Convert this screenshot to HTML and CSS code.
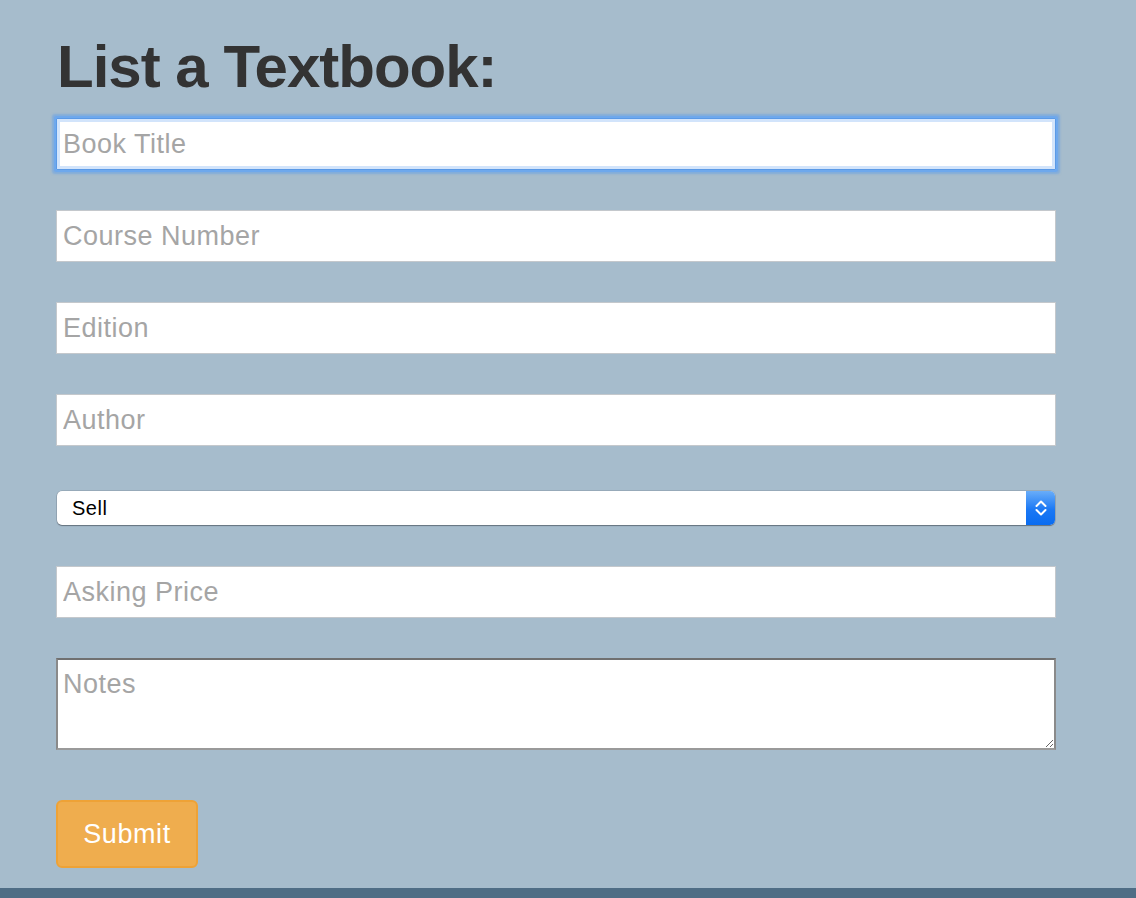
FILE: index.html
```html
<!DOCTYPE html>
<html lang="en">
<head>
<meta charset="utf-8">
<title>List a Textbook</title>
<link rel="stylesheet" href="styles.css">
</head>
<body>
<main class="page">
  <h1 class="title">List a Textbook:</h1>
  <form class="form">
    <input class="field field-focus" type="text" placeholder="Book Title" autofocus>
    <input class="field" type="text" placeholder="Course Number">
    <input class="field" type="text" placeholder="Edition">
    <input class="field" type="text" placeholder="Author">
    <div class="select-wrap">
      <select class="select">
        <option>Sell</option>
        <option>Buy</option>
      </select>
      <span class="select-arrow">
        <svg width="14" height="20" viewBox="0 0 14 20"><path d="M2.5 8 L7 3.5 L11.5 8 M2.5 12 L7 16.5 L11.5 12" fill="none" stroke="#fff" stroke-width="2" stroke-linecap="round" stroke-linejoin="round"/></svg>
      </span>
    </div>
    <input class="field" type="text" placeholder="Asking Price">
    <textarea class="notes" placeholder="Notes"></textarea>
    <div class="actions">
      <button class="submit" type="button">Submit</button>
    </div>
  </form>
</main>
<footer class="footer-bar"></footer>
</body>
</html>
```

FILE: styles.css
```css
html, body {
  margin: 0;
  padding: 0;
}
body {
  background: #a6bccc;
  font-family: "Liberation Sans", Arial, sans-serif;
  min-height: 898px;
  display: flex;
  flex-direction: column;
}
.page {
  padding: 0 80px 0 56px;
}
.title {
  margin: 32px 0 16px 1px;
  font-size: 60px;
  line-height: 70px;
  font-weight: bold;
  letter-spacing: -1px;
  color: #333333;
}
.form {
  display: flex;
  flex-direction: column;
  gap: 40px;
  width: 1000px;
}
.field {
  box-sizing: border-box;
  width: 1000px;
  height: 52px;
  margin: 0;
  border: 1px solid #c4c8cc;
  background: #fff;
  padding: 0 6px;
  font-family: "Liberation Sans", Arial, sans-serif;
  font-size: 27px;
  letter-spacing: 0.5px;
  color: #333;
  caret-color: #000;
  outline: none;
}
.field::placeholder,
.notes::placeholder {
  color: #a5a5a5;
  opacity: 1;
}
.field-focus {
  border: 1px solid #5b9ae6;
  box-shadow: 0 0 0 2px #6ea8ec, 0 0 2px 4px rgba(98, 158, 232, 0.55), inset 0 0 0 3px #d2e4fb;
  border-radius: 1px;
}
.select-wrap {
  position: relative;
  width: 998px;
  height: 34px;
  margin: 5px 0 1px 1px;
}
.select {
  -webkit-appearance: none;
  appearance: none;
  box-sizing: border-box;
  width: 100%;
  height: 34px;
  margin: 0;
  border: none;
  border-radius: 5px;
  background: #fff;
  box-shadow: 0 1px 1px rgba(60, 70, 80, 0.55), 0 0 0 0.5px rgba(80, 90, 100, 0.35);
  padding: 0 40px 0 15px;
  font-family: "Liberation Sans", Arial, sans-serif;
  font-size: 20px;
  letter-spacing: 0.5px;
  color: #000;
  outline: none;
}
.select-arrow {
  position: absolute;
  right: 0;
  top: 0;
  width: 29px;
  height: 34px;
  border-radius: 0 5px 5px 0;
  background: linear-gradient(#69adf9, #1a78f5 55%, #0a6cf0);
  display: flex;
  align-items: center;
  justify-content: center;
  pointer-events: none;
}
.notes {
  box-sizing: border-box;
  width: 1000px;
  height: 92px;
  margin: 0;
  border: 2px solid #9a9a9a;
  border-top-color: #707070;
  border-left-color: #8a8a8a;
  border-right-color: #8a8a8a;
  background: #fff;
  padding: 9px 5px;
  font-family: "Liberation Sans", Arial, sans-serif;
  font-size: 27px;
  letter-spacing: 0.5px;
  line-height: 30px;
  outline: none;
  resize: both;
}
.actions {
  display: flex;
  margin-top: 10px;
}
.submit {
  box-sizing: border-box;
  width: 142px;
  height: 68px;
  border: 2px solid #eea236;
  border-radius: 6px;
  background: #efad4e;
  color: #fff;
  font-family: "Liberation Sans", Arial, sans-serif;
  font-size: 27px;
  letter-spacing: 0.6px;
  padding: 0;
  cursor: pointer;
}
.footer-bar {
  margin-top: 20px;
  height: 10px;
  background: #4f6d85;
  flex: 0 0 auto;
}
```
